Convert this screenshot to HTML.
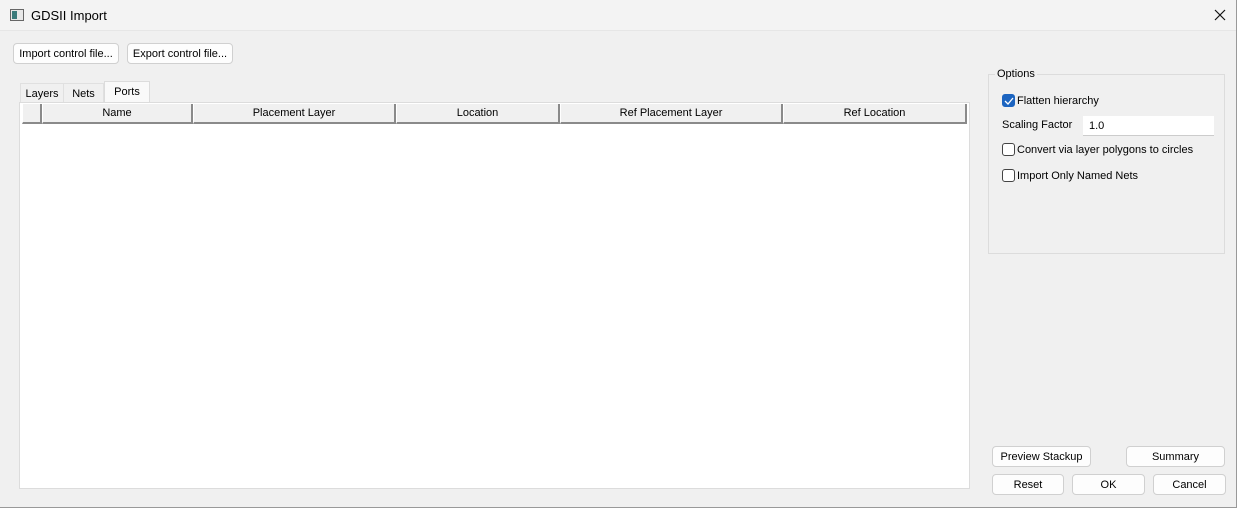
<!DOCTYPE html>
<html><head><meta charset="utf-8"><style>
*{box-sizing:border-box;margin:0;padding:0}
body{width:1237px;height:508px;background:#f0f0f0;font-family:"Liberation Sans",sans-serif;font-size:11px;color:#000;position:relative;overflow:hidden}
.abs{position:absolute}
.title{left:0;top:0;width:1237px;height:31px;background:#f3f3f3;border-bottom:1px solid #e6e6e6}
.btn{position:absolute;height:21px;background:#fdfdfd;border:1px solid #d0d0d0;border-radius:4px;text-align:center;line-height:20px;font-size:11px}
.th{position:absolute;top:104px;height:20px;background:#f0f0f0;border-right:2px solid #8a8a8a;border-bottom:2px solid #8a8a8a;border-left:1px solid #fff;text-align:center;line-height:18px;font-size:11px}
.cb{position:absolute;width:13px;height:13px;border:1px solid #444;border-radius:3px;background:#fff}
.lbl{position:absolute;font-size:11px}
</style></head><body>
<div class="abs title"></div>
<div class="abs" style="left:10px;top:9px;width:14px;height:12px;border:1px solid #666;background:#e8e8e8"></div>
<div class="abs" style="left:12px;top:11px;width:5px;height:8px;background:#3b7b7b"></div>
<div class="abs" style="left:31px;top:8px;font-size:13px">GDSII Import</div>
<svg class="abs" style="left:1214px;top:9px" width="12" height="12"><path d="M1 1L11 11M11 1L1 11" stroke="#111" stroke-width="1.2"/></svg>
<div class="abs" style="left:1236px;top:0;width:1px;height:508px;background:#999"></div>
<div class="abs" style="left:0;top:507px;width:1237px;height:1px;background:#999"></div>

<div class="btn" style="left:13px;top:43px;width:106px">Import control file...</div>
<div class="btn" style="left:127px;top:43px;width:106px">Export control file...</div>

<div class="abs" style="left:20px;top:83px;width:44px;height:20px;background:#f0f0f0;border:1px solid #e0e0e0;border-bottom:none;line-height:21px;text-align:center">Layers</div>
<div class="abs" style="left:63px;top:83px;width:41px;height:20px;background:#f0f0f0;border:1px solid #e0e0e0;border-bottom:none;line-height:21px;text-align:center">Nets</div>
<div class="abs" style="left:104px;top:81px;width:46px;height:23px;background:#f9f9f9;border:1px solid #dcdcdc;border-bottom:none;line-height:20px;text-align:center">Ports</div>

<div class="abs" style="left:19px;top:102px;width:951px;height:387px;background:#fff;border:1px solid #dcdcdc"></div>
<div class="abs" style="left:22px;top:104px;width:945px;height:20px;background:#f0f0f0"></div>
<div class="th" style="left:22px;width:20px"></div>
<div class="th" style="left:42px;width:151px">Name</div>
<div class="th" style="left:193px;width:203px">Placement Layer</div>
<div class="th" style="left:396px;width:164px">Location</div>
<div class="th" style="left:560px;width:223px">Ref Placement Layer</div>
<div class="th" style="left:783px;width:184px">Ref Location</div>

<div class="abs" style="left:988px;top:74px;width:237px;height:180px;border:1px solid #dcdcdc"></div>
<div class="abs" style="left:995px;top:68px;background:#f0f0f0;padding:0 2px">Options</div>
<div class="cb" style="left:1002px;top:94px;background:#1c64c0;border-color:#1c64c0"></div>
<svg class="abs" style="left:1004px;top:97px" width="10" height="8"><path d="M1 4L4 7L9 1" stroke="#fff" stroke-width="1.3" fill="none"/></svg>
<div class="lbl" style="left:1017px;top:95px">Flatten hierarchy</div>
<div class="lbl" style="left:1002px;top:119px">Scaling Factor</div>
<div class="abs" style="left:1083px;top:116px;width:131px;height:20px;background:#fff;border-bottom:1px solid #ccc;padding-left:6px;line-height:21px">1.0</div>
<div class="cb" style="left:1002px;top:143px"></div>
<div class="lbl" style="left:1017px;top:144px">Convert via layer polygons to circles</div>
<div class="cb" style="left:1002px;top:169px"></div>
<div class="lbl" style="left:1017px;top:170px">Import Only Named Nets</div>

<div class="btn" style="left:992px;top:446px;width:99px">Preview Stackup</div>
<div class="btn" style="left:1126px;top:446px;width:99px">Summary</div>
<div class="btn" style="left:992px;top:474px;width:72px">Reset</div>
<div class="btn" style="left:1072px;top:474px;width:73px">OK</div>
<div class="btn" style="left:1153px;top:474px;width:73px">Cancel</div>
</body></html>
